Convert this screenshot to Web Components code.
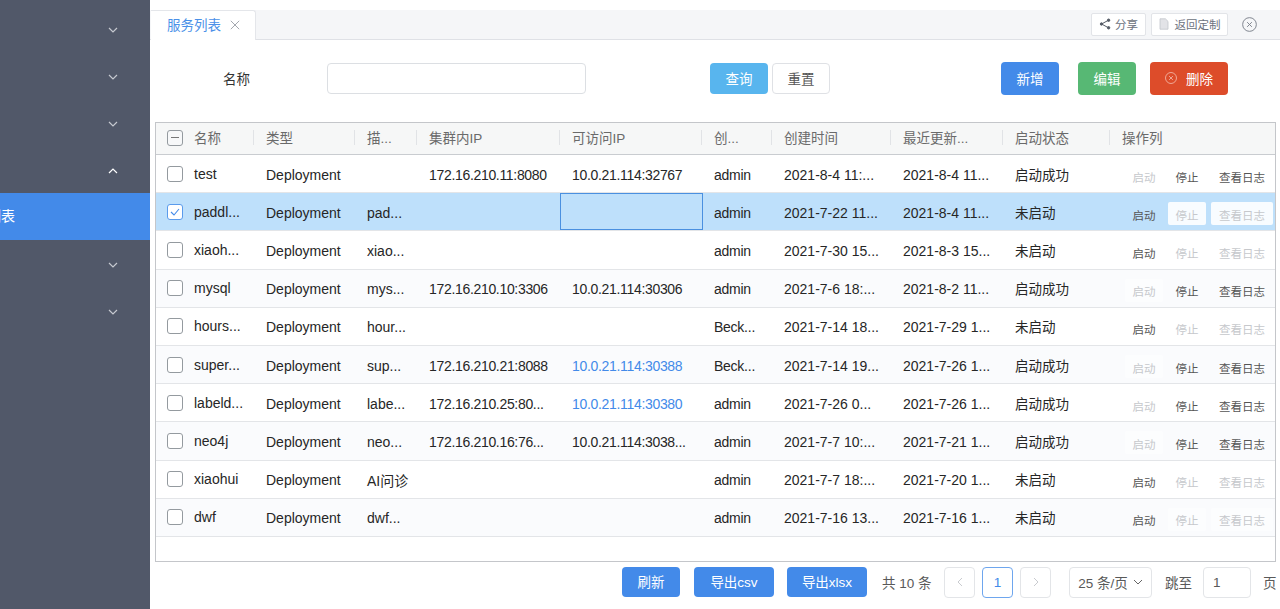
<!DOCTYPE html>
<html lang="zh"><head><meta charset="utf-8"><title>服务列表</title>
<style>
html,body{margin:0;height:100%;overflow:hidden;background:#fff}
body{font:14px "Liberation Sans","Noto Sans CJK SC",sans-serif;color:#262626}
</style></head><body>
<x-app></x-app>
<script>
const chev=(d,c,w=1.2)=>`<svg width="10" height="6" viewBox="0 0 10 6" fill="none" stroke="${c}" stroke-width="${w}"><path d="${d==='up'?'M1 5l4-4 4 4':'M1 1l4 4 4-4'}"/></svg>`;
const closeCircle=(s,c)=>`<svg width="${s}" height="${s}" viewBox="0 0 14 14" fill="none" stroke="${c}" stroke-width=".9"><circle cx="7" cy="7" r="6.4"/><path d="M4.8 4.8l4.4 4.4M9.2 4.8l-4.4 4.4"/></svg>`;

class XSidebar extends HTMLElement{connectedCallback(){
  const s=this.attachShadow({mode:'open'});
  s.innerHTML=`<style>
  :host{display:block;width:150px;height:609px;background:#515869;overflow:hidden;flex:none;box-sizing:border-box;padding-top:5px}
  .i{height:47px;box-sizing:border-box;display:flex;align-items:center;justify-content:flex-end;padding:2px 32px 0 0}
  .a{height:47px;box-sizing:border-box;background:#438ae9;color:#fff;display:flex;align-items:center;padding:0 0 3px 0;font-size:14px;margin-left:-13px}
  </style>
  <div class="i">${chev('d','#c6c9d0')}</div><div class="i">${chev('d','#c6c9d0')}</div><div class="i">${chev('d','#c6c9d0')}</div><div class="i">${chev('up','#fff')}</div>
  <div class="a">列表</div>
  <div class="i">${chev('d','#c6c9d0')}</div><div class="i">${chev('d','#c6c9d0')}</div>`;
}}
class XBtn extends HTMLElement{connectedCallback(){
  const s=this.attachShadow({mode:'open'});
  s.innerHTML=`<style>
  :host{display:inline-flex;align-items:center;justify-content:center;box-sizing:border-box;height:32px;border-radius:4px;font-size:13.5px;color:#fff;background:var(--bg,#438ae9);border:1px solid var(--bd,transparent);white-space:nowrap;gap:var(--gap,0);padding-bottom:2px;flex:none}
  </style><slot></slot>`;
}}
class XTabbar extends HTMLElement{connectedCallback(){
  const s=this.attachShadow({mode:'open'});
  s.innerHTML=`<style>
  :host{display:flex;height:30px;margin-top:10px;background:#f5f6f8;border-bottom:1px solid #dfe1e6;box-sizing:border-box;align-items:stretch}
  .tab{width:105px;height:30px;box-sizing:border-box;background:#fff;border:1px solid #e4e6ea;border-bottom:0;border-left:0;border-radius:0 3px 0 0;margin-left:1px;display:flex;align-items:center;padding:0 0 4px 16px;color:#4a90e8;font-size:13.5px;gap:9px}
  .tab svg{margin-top:2px}
  .sp{flex:1}
  .tools{display:flex;align-items:center;gap:5px;padding-right:23px;height:30px;margin-top:-1px}
  .t{height:23px;box-sizing:border-box;background:#fff;border:1px solid #e2e4e8;border-radius:2px;font-size:11.5px;color:#6c7280;display:flex;align-items:center;justify-content:center;gap:4px;padding-bottom:1px}
  .c{margin-left:9px;display:flex}
  </style>
  <div class="tab">服务列表<svg width="10" height="10" viewBox="0 0 10 10" stroke="#a3a7af" stroke-width="1" fill="none"><path d="M.8.8l8.4 8.4M9.2.8L.8 9.2"/></svg></div>
  <div class="sp"></div>
  <div class="tools">
    <div class="t" style="width:55px"><svg width="12" height="12" viewBox="0 0 12 12" fill="#555b66" stroke="#555b66" stroke-width="1"><path fill="none" d="M9.5 2.2L2.6 6l6.9 3.8"/><circle cx="9.6" cy="2.2" r="1.2"/><circle cx="2.5" cy="6" r="1.2"/><circle cx="9.6" cy="9.8" r="1.2"/></svg>分享</div>
    <div class="t" style="width:77px;gap:6px"><svg width="10" height="12" viewBox="0 0 10 12" fill="#e2e3e7" stroke="#c2c5cb" stroke-width=".8"><path d="M1 .8h5.4L9 3.4v7.8H1z"/></svg>返回定制</div>
    <span class="c">${closeCircle(15,'#7d828c')}</span>
  </div>`;
}}
class XFilter extends HTMLElement{connectedCallback(){
  const s=this.attachShadow({mode:'open'});
  s.innerHTML=`<style>
  :host{display:flex;align-items:center;height:82px;box-sizing:border-box;padding:0 0 5px 73px}
  .l{width:104px;font-size:13.5px;color:#333;padding-bottom:2px}
  .in{width:259px;height:31px;box-sizing:border-box;border:1px solid #dcdfe3;border-radius:4px;background:#fff;flex:none}
  x-btn{height:31px}
  x-btn.big{height:33px}
  </style>
  <span class="l">名称</span><div class="in"></div>
  <x-btn style="--bg:#58b5ee;width:58px;margin-left:124px">查询</x-btn>
  <x-btn style="--bg:#fff;--bd:#dfe1e5;color:#555;width:58px;margin-left:4px">重置</x-btn>
  <x-btn class="big" style="--bg:#438ae9;width:58px;margin-left:171px">新增</x-btn>
  <x-btn class="big" style="--bg:#57b874;width:58px;margin-left:19px">编辑</x-btn>
  <x-btn class="big" style="--bg:#dd4c2a;width:78px;margin-left:14px;--gap:9px">${closeCircle(12,'#f4c3b6')}<span>删除</span></x-btn>`;
}}
class XCheck extends HTMLElement{connectedCallback(){
  const k=this.getAttribute('state')||'';
  const s=this.attachShadow({mode:'open'});
  const inner=k==='ind'?'<i></i>':k==='on'?'<svg width="10" height="8" viewBox="0 0 10 8" fill="none" stroke="#438ae9" stroke-width="1.1"><path d="M1 4l3 3 5-6"/></svg>':'';
  s.innerHTML=`<style>
  :host{display:inline-flex;width:16px;height:16px;box-sizing:border-box;border:1px solid ${k==='on'?'#5a9bec':'#949a9f'};${k==='on'?'border-width:1.5px;':''}border-radius:3px;background:${k==='ind'?'#f7f8f9':'#fff'};align-items:center;justify-content:center;flex:none}
  i{display:block;width:8px;height:1px;background:#777}
  </style>${inner}`;
}}
const COLS=[[98,'名称'],[101,'类型'],[62,'描...'],[143,'集群内IP'],[142,'可访问IP'],[70,'创...'],[119,'创建时间'],[112,'最近更新...'],[107,'启动状态'],[165,'操作列']];
const ROWS=[
['test','xx','','172.16.210.11:8080','10.0.21.114:32767','admin','2021-8-4 11:...','2021-8-4 11...','启动成功'],
['paddl...','','pad...','','','admin','2021-7-22 11...','2021-8-4 11...','未启动'],
['xiaoh...','','xiao...','','','admin','2021-7-30 15...','2021-8-3 15...','未启动'],
['mysql','','mys...','172.16.210.10:3306','10.0.21.114:30306','admin','2021-7-6 18:...','2021-8-2 11...','启动成功'],
['hours...','','hour...','','','Beck...','2021-7-14 18...','2021-7-29 1...','未启动'],
['super...','','sup...','172.16.210.21:8088','@10.0.21.114:30388','Beck...','2021-7-14 19...','2021-7-26 1...','启动成功'],
['labeld...','','labe...','172.16.210.25:80...','@10.0.21.114:30380','admin','2021-7-26 0...','2021-7-26 1...','启动成功'],
['neo4j','','neo...','172.16.210.16:76...','10.0.21.114:3038...','admin','2021-7-7 10:...','2021-7-21 1...','启动成功'],
['xiaohui','','AI问诊','','','admin','2021-7-7 18:...','2021-7-20 1...','未启动'],
['dwf','','dwf...','','','admin','2021-7-16 13...','2021-7-16 1...','未启动']];
class XTable extends HTMLElement{connectedCallback(){
  const s=this.attachShadow({mode:'open'});
  const tpl=COLS.map(c=>c[0]+'px').join(' ');
  const head=COLS.map((c,i)=>`<div class="h ${i?'':'first'}">${i?'':'<x-check state="ind"></x-check>'}<span>${c[1]}</span></div>`).join('');
  const rows=ROWS.map((r,ri)=>{
    const started=r[8]==='启动成功', sel=ri===1;
    const cells=r.map((v,i)=>{
      if(i===0) return `<div class="c first"><x-check ${sel?'state="on"':''}></x-check><span>${v}</span></div>`;
      if(i===1) return `<div class="c">Deployment</div>`;
      const link=v[0]==='@';
      const cl=(sel&&i===4?'c cur':'c')+(link?' link':'')+(i===3||i===4?' ip':'')+(i===5?' who':'')+(i===8?' st8':'');
      return `<div class="${cl}">${link?v.slice(1):v}</div>`;
    }).join('');
    return `<div class="r ${ri%2?'st':''} ${sel?'sel':''}">${cells}<div class="c ops">
      <span class="op ${started?'off':''}">启动</span><span class="op ${started?'':'off'}">停止</span><span class="op w ${started?'':'off'}">查看日志</span></div></div>`;
  }).join('');
  s.innerHTML=`<style>
  :host{display:block;box-sizing:border-box;margin:0 4px 0 5px;height:440px;border:1px solid #c4c6ca;overflow:hidden;background:#fff}
  .hd,.r{display:grid;grid-template-columns:${tpl}}
  .hd{height:32px;background:#f6f7f7;border-bottom:1px solid #c9ccd0;box-sizing:border-box}
  .h{display:flex;align-items:center;padding:0 0 4px 12px;color:#6a6a6a;font-size:13.5px;position:relative;white-space:nowrap}
  .h x-check{margin-top:2px}
  .h:not(:last-child)::after{content:"";position:absolute;right:0;top:7px;height:15px;width:1px;background:#e1e3e6}
  .first{padding-left:11px;gap:11px;display:flex;align-items:center}
  .r{height:38.2px;border-bottom:1px solid #e3e5e8;box-sizing:border-box;color:#262626}
  .st{background:#fafbfd}
  .sel{background:#bee0fb}
  .c{display:flex;align-items:center;padding:2px 0 0 12px;font-size:14px;white-space:nowrap;overflow:hidden;box-sizing:border-box}
  .c.first{padding:0 0 0 11px}
  .ip{letter-spacing:-.32px}
  .who{letter-spacing:-.25px}
  .st8{font-size:13.5px;padding-top:0}
  .cur{border:1px solid #4a90e0;padding:0 0 0 11px;margin:0 -1px 0 0}
  .link{color:#438ae9}
  .ops{padding:4px 0 0 15px;gap:5px;overflow:visible}
  .op{width:38px;height:23px;box-sizing:border-box;display:flex;align-items:center;justify-content:center;border-radius:2px;font-size:11.5px;color:#555;flex:none;padding-top:2px}
  .op.w{width:62px}
  .op.off{color:#c6c8cc}
  .st .op.off{background:#fcfdfe}
  .sel .op.off{background:#f8fcff}
  .sel .op{color:#555}
  .sel .op.off{color:#c6c8cc}
  </style>
  <div class="hd">${head}</div>${rows}`;
}}
class XPager extends HTMLElement{connectedCallback(){
  const s=this.attachShadow({mode:'open'});
  s.innerHTML=`<style>
  :host{display:flex;align-items:center;height:30px;margin-top:5px;padding-left:472px;font-size:13.5px;color:#595959;box-sizing:border-box;white-space:nowrap}
  x-btn{height:30px}
  .b{width:31px;height:31px;box-sizing:border-box;border:1px solid #e3e5e8;border-radius:4px;display:flex;align-items:center;justify-content:center;background:#fff;flex:none}
  .cur{border-color:#6ea6ee;color:#438ae9;margin:0 7px}
  .sel{height:31px;width:83px;box-sizing:border-box;border:1px solid #e3e5e8;border-radius:4px;display:flex;align-items:center;justify-content:center;gap:5px;margin-left:18px;flex:none}
  .in{width:48px;height:31px;box-sizing:border-box;border:1px solid #e3e5e8;border-radius:4px;padding-left:9px;display:flex;align-items:center;margin:0 12px 0 11px;flex:none}
  .t{padding-bottom:1px}
  </style>
  <x-btn style="width:58px">刷新</x-btn>
  <x-btn style="width:80px;margin-left:14px">导出csv</x-btn>
  <x-btn style="width:80px;margin-left:13px">导出xlsx</x-btn>
  <span class="t" style="margin:0 13px 0 15px;width:49px">共 10 条</span>
  <div class="b"><svg width="6" height="10" viewBox="0 0 6 10" fill="none" stroke="#c9cbcf"><path d="M5 1L1 5l4 4"/></svg></div>
  <div class="b cur">1</div>
  <div class="b"><svg width="6" height="10" viewBox="0 0 6 10" fill="none" stroke="#c9cbcf"><path d="M1 1l4 4-4 4"/></svg></div>
  <div class="sel"><span class="t">25 条/页</span> ${chev('d','#666',1)}</div>
  <span class="t" style="margin-left:13px;width:27px">跳至</span>
  <div class="in">1</div><span class="t">页</span>`;
}}
class XApp extends HTMLElement{connectedCallback(){
  const s=this.attachShadow({mode:'open'});
  s.innerHTML=`<style>
  :host{display:flex;width:1280px;height:609px;overflow:hidden}
  main{flex:1;min-width:0;box-sizing:border-box}
  </style>
  <x-sidebar></x-sidebar>
  <main><x-tabbar></x-tabbar><x-filter></x-filter><x-table></x-table><x-pager></x-pager></main>`;
}}
for(const [n,c] of [['x-btn',XBtn],['x-check',XCheck],['x-sidebar',XSidebar],['x-tabbar',XTabbar],['x-filter',XFilter],['x-table',XTable],['x-pager',XPager],['x-app',XApp]]) customElements.define(n,c);
</script>
</body></html>
